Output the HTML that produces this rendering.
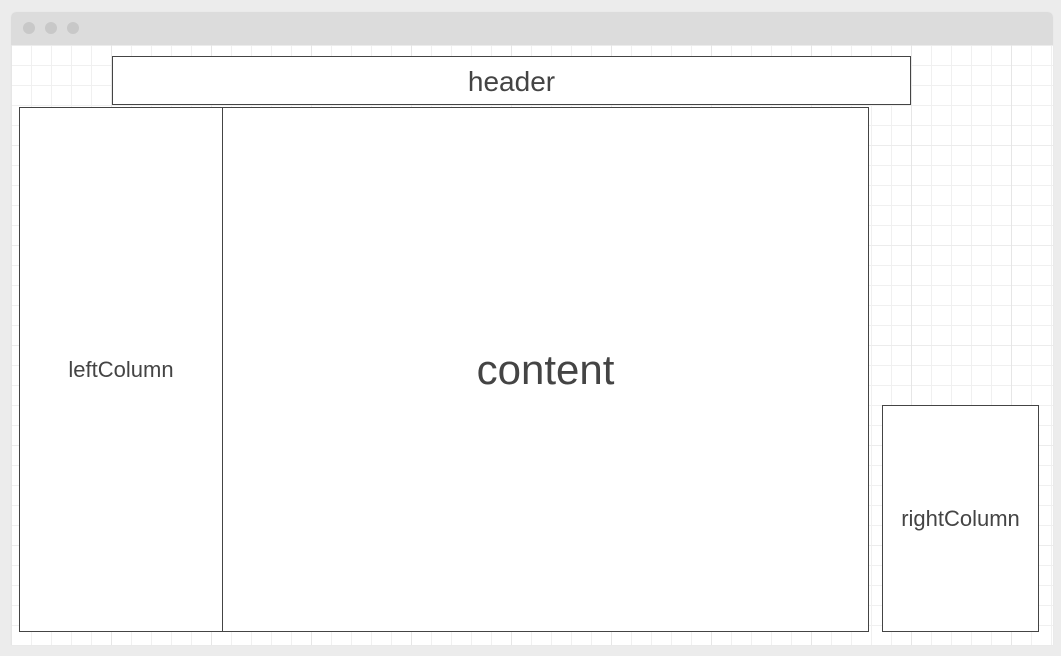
<!DOCTYPE html>
<html><head><meta charset="utf-8"><style>
html,body{margin:0;padding:0;width:1061px;height:656px;background:#ececec;overflow:hidden;font-family:"Liberation Sans",sans-serif;color:#444}
.win{position:absolute;left:11px;top:12px;width:1042px;height:633px;background:#fff;border-radius:5px 5px 0 0;overflow:hidden;box-shadow:0 0 1px #ddd}
.bar{position:absolute;left:0;top:0;right:0;height:33px;background:#dcdcdc}
.dot{position:absolute;top:10px;width:12px;height:12px;border-radius:50%;background:#c8c8c8}
.grid{position:absolute;left:0;top:33px;right:0;bottom:0;
background-image:linear-gradient(to right,#e6e6e6 1px,transparent 1px),linear-gradient(to bottom,#ececec 1px,transparent 1px),linear-gradient(to right,#f0f0f0 1px,transparent 1px),linear-gradient(to bottom,#f0f0f0 1px,transparent 1px);
background-size:100px 100px,100px 100px,20px 20px,20px 20px;background-position:0 0,0 0,0 0,0 0}
.b{position:absolute;border:1px solid #444;background:#fff;box-sizing:border-box;display:flex;align-items:center;justify-content:center}
</style></head><body>
<div class="win">
<div class="bar"><div class="dot" style="left:12px"></div><div class="dot" style="left:34px"></div><div class="dot" style="left:56px"></div></div>
<div class="grid"></div>
</div>
<div class="b" style="left:112px;top:56px;width:799px;height:49px;font-size:28px;padding-top:2px">header</div>
<div class="b" style="left:19px;top:107px;width:204px;height:525px;font-size:22px">leftColumn</div>
<div class="b" style="left:222px;top:107px;width:647px;height:525px;font-size:42px">content</div>
<div class="b" style="left:882px;top:405px;width:157px;height:227px;font-size:22px">rightColumn</div>
</body></html>
